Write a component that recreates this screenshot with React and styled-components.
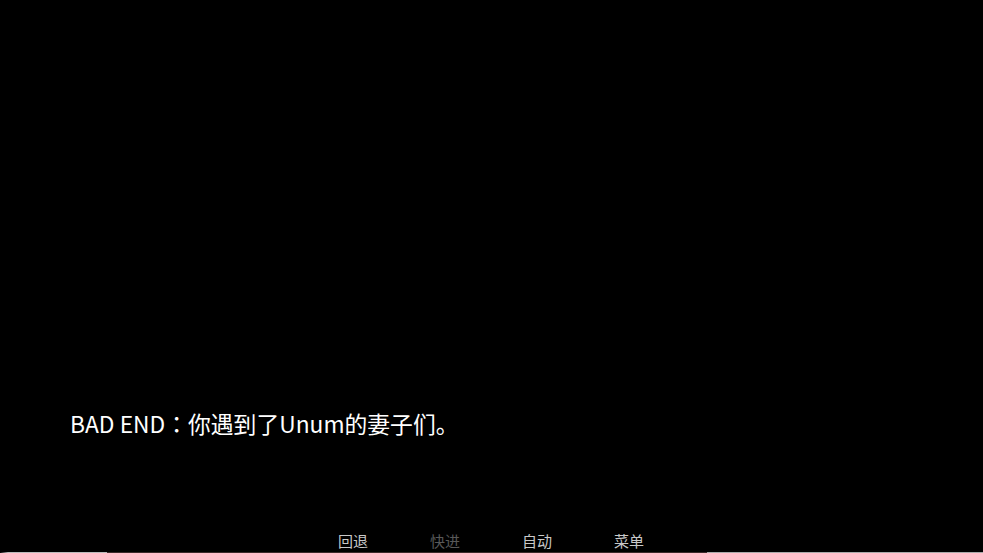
import React from "react";
import styled, { createGlobalStyle } from "styled-components";

const Global = createGlobalStyle`
  html, body { margin: 0; padding: 0; background: #000; }
  body { font-family: "Noto Sans CJK JP", "Noto Sans", sans-serif; }
`;

const Screen = styled.div`
  width: 983px;
  height: 553px;
  background: #000;
  display: flex;
  flex-direction: column;
  overflow: hidden;
`;

const Stage = styled.div`
  flex: 1;
  display: flex;
  flex-direction: column;
  justify-content: flex-end;
  padding: 0 0 91px 70px;
`;

const Line = styled.div`
  color: #fff;
  font-size: 22.8px;
  line-height: 30px;
  font-family: "Noto Sans CJK JP", sans-serif;
`;

const Menu = styled.div`
  display: flex;
  justify-content: center;
  gap: 61px;
  height: 22px;
`;

const MenuItem = styled.span`
  color: ${(p) => (p.$dim ? "#585858" : "#c8c8c8")};
  font-size: 15px;
  line-height: 22px;
  width: 31px;
  white-space: nowrap;
  font-family: "Noto Sans CJK SC", sans-serif;
`;

const Edge = styled.div`
  height: 1px;
  background: linear-gradient(
    to right,
    #000 0px,
    #bbb 8px,
    #bbb 107px,
    #3a2a2a 107px,
    #3a2a2a 707px,
    #aaa 707px,
    #aaa 983px
  );
`;

export default function App() {
  return (
    <Screen>
      <Global />
      <Stage>
        <Line>BAD END：你遇到了Unum的妻子们。</Line>
      </Stage>
      <Menu>
        <MenuItem>回退</MenuItem>
        <MenuItem $dim>快进</MenuItem>
        <MenuItem>自动</MenuItem>
        <MenuItem>菜单</MenuItem>
      </Menu>
      <Edge />
    </Screen>
  );
}
